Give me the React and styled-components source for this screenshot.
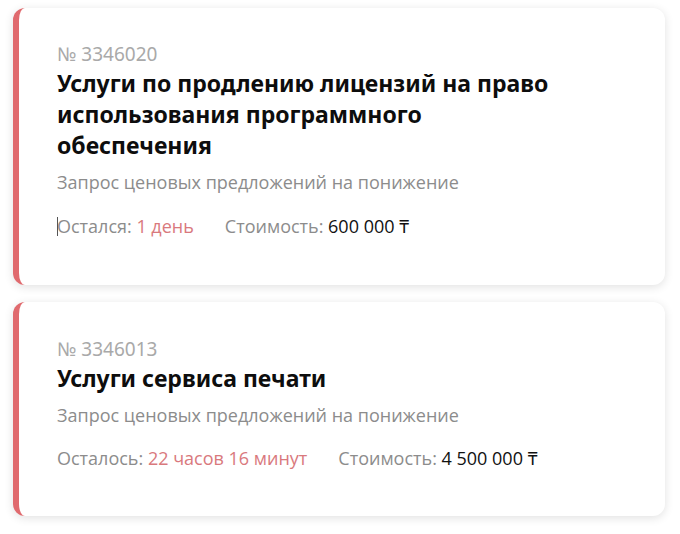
import React from 'react';
import styled, { createGlobalStyle } from 'styled-components';

const GlobalStyle = createGlobalStyle`
  html, body {
    margin: 0;
    padding: 0;
    background: #ffffff;
  }
  body {
    font-family: "Open Sans", "Noto Sans", sans-serif;
  }
`;

const List = styled.div`
  display: flex;
  flex-direction: column;
  gap: 17px;
  padding: 8px 15px 16px 13px;
`;

const Card = styled.div`
  background: #fff;
  border-left: 6px solid #e06a6e;
  border-radius: 12px;
  box-shadow: 0 2px 10px rgba(0, 0, 0, 0.12);
  padding: ${(p) => p.$top}px 40px ${(p) => p.$bottom}px 38px;
`;

const Number = styled.div`
  font-family: "Noto Sans", sans-serif;
  font-size: 19px;
  line-height: 24px;
  color: #a9a9a9;
`;

const Title = styled.div`
  font-family: "Noto Sans", sans-serif;
  font-weight: 700;
  font-size: 23px;
  line-height: 31px;
  color: #0d0d0d;
  margin-top: 2px;
  max-width: 520px;
`;

const Subtitle = styled.div`
  font-size: 18px;
  line-height: 24px;
  color: #8c8c8c;
  margin-top: 9px;
`;

const Meta = styled.div`
  display: flex;
  gap: 31px;
  margin-top: ${(p) => p.$gap}px;
  font-size: 18px;
  line-height: 24px;
  color: #8c8c8c;
  position: relative;
`;

const Caret = styled.span`
  position: absolute;
  left: 0;
  top: 3px;
  width: 1px;
  height: 19px;
  background: #555;
`;

const Left = styled.span`
  color: #d9797d;
`;

const Price = styled.span`
  color: #111;
`;

const tenders = [
  {
    id: '3346020',
    title: 'Услуги по продлению лицензий на право использования программного обеспечения',
    left: 'Остался:',
    time: '1 день',
    price: '600 000',
    top: 34,
    bottom: 47,
    gap: 20,
    caret: true,
  },
  {
    id: '3346013',
    title: 'Услуги сервиса печати',
    left: 'Осталось:',
    time: '22 часов 16 минут',
    price: '4 500 000',
    top: 35,
    bottom: 46,
    gap: 19,
  },
];

export default function App() {
  return (
    <>
      <GlobalStyle />
      <List>
        {tenders.map((t) => (
          <Card key={t.id} $top={t.top} $bottom={t.bottom}>
            <Number>№ {t.id}</Number>
            <Title>{t.title}</Title>
            <Subtitle>Запрос ценовых предложений на понижение</Subtitle>
            <Meta $gap={t.gap}>
              {t.caret && <Caret />}
              <span>
                {t.left} <Left>{t.time}</Left>
              </span>
              <span>
                Стоимость: <Price>{t.price} ₸</Price>
              </span>
            </Meta>
          </Card>
        ))}
      </List>
    </>
  );
}
